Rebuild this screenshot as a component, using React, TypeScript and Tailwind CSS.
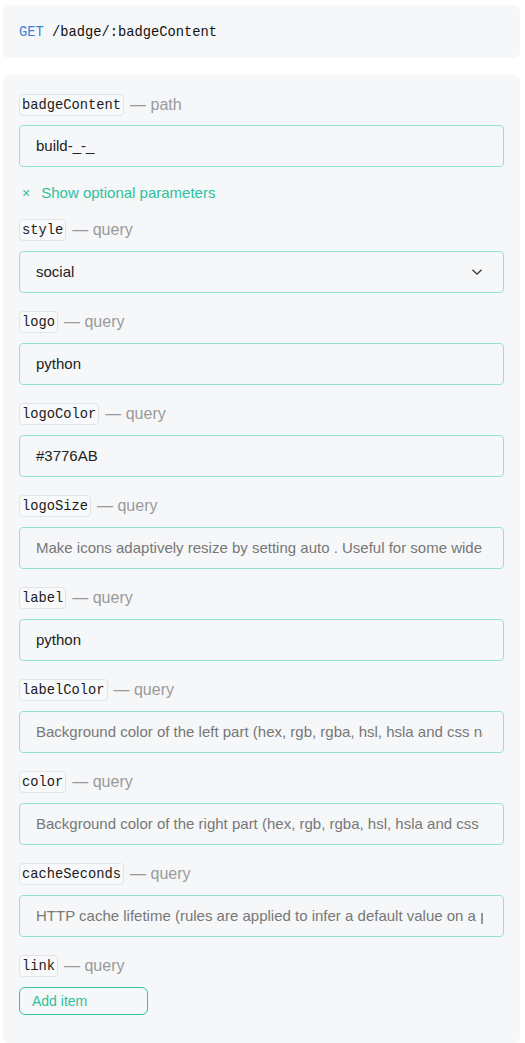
import React from 'react';

interface Param {
  name: string;
  kind: 'path' | 'query';
  value?: string;
  placeholder?: string;
  select?: boolean;
}

const mono = { fontFamily: '"Liberation Mono", "DejaVu Sans Mono", monospace' };

const optionalParams: Param[] = [
  { name: 'style', kind: 'query', value: 'social', select: true },
  { name: 'logo', kind: 'query', value: 'python' },
  { name: 'logoColor', kind: 'query', value: '#3776AB' },
  { name: 'logoSize', kind: 'query', placeholder: 'Make icons adaptively resize by setting auto . Useful for some wide logos like amd and amg.' },
  { name: 'label', kind: 'query', value: 'python' },
  { name: 'labelColor', kind: 'query', placeholder: 'Background color of the left part (hex, rgb, rgba, hsl, hsla and css named colors supported).' },
  { name: 'color', kind: 'query', placeholder: 'Background color of the right part (hex, rgb, rgba, hsl, hsla and css named colors supported).' },
  { name: 'cacheSeconds', kind: 'query', placeholder: 'HTTP cache lifetime (rules are applied to infer a default value on a per-badge basis).' },
];

const ParamLabel: React.FC<{ name: string; kind: string }> = ({ name, kind }) => (
  <div className="flex items-center h-[22px]">
    <code
      className="h-[22px] flex items-center pt-[2px] px-[2px] rounded-[4px] border border-[#e2e4e7] bg-[#f8f9fa] text-[13.75px] text-[#1b1b1b]"
      style={mono}
    >
      {name}
    </code>
    <span className="ml-[6px] text-[16px] text-[#9a9a9a]">— {kind}</span>
  </div>
);

const Field: React.FC<{ p: Param }> = ({ p }) => (
  <div className="flex flex-col gap-[10px]">
    <ParamLabel name={p.name} kind={p.kind} />
    <div className="h-[42px] flex items-center justify-between rounded-[4px] border border-[#93e3cf] pl-[16px] pr-[20px] overflow-hidden">
      {p.value ? (
        <span className="text-[15px] text-[#222] whitespace-nowrap">{p.value}</span>
      ) : (
        <span className="text-[15px] text-[#777] whitespace-nowrap overflow-hidden">{p.placeholder}</span>
      )}
      {p.select && (
        <svg width="12" height="8" viewBox="0 0 12 8" fill="none" className="shrink-0">
          <path d="M1.5 1.8 6 6.2 10.5 1.8" stroke="#333" strokeWidth="1.3" />
        </svg>
      )}
    </div>
  </div>
);

export default function App() {
  return (
    <div className="w-[525px] min-h-[1043px] bg-white px-[3px] pt-[5px]" style={{ fontFamily: '"Liberation Sans", Arial, sans-serif' }}>
      <div className="h-[53px] rounded-[6px] bg-[#f6f7f9] flex items-center pt-[4px] px-[16px] w-[517px]">
        <span className="text-[13.75px] text-[#111]" style={mono}>
          <span className="text-[#3b82d6]">GET</span> /badge/:badgeContent
        </span>
      </div>

      <div className="mt-[17px] w-[517px] rounded-[6px] bg-[#f6f7f9] px-[16px] pt-[19px] pb-[28px]">
        <div className="flex flex-col gap-[9px]">
          <ParamLabel name="badgeContent" kind="path" />
          <div className="h-[42px] flex items-center rounded-[4px] border border-[#93e3cf] pl-[16px]">
            <span className="text-[15px] text-[#222]">build-_-_</span>
          </div>
        </div>

        <div className="h-[52px] flex items-center text-[15px] text-[#2dc19f]">
          <span className="ml-[3px] mr-[11px] text-[14px]">×</span>
          Show optional parameters
        </div>

        <div className="flex flex-col gap-[18px]">
          {optionalParams.map((p) => (
            <Field key={p.name} p={p} />
          ))}
          <div className="flex flex-col gap-[10px]">
            <ParamLabel name="link" kind="query" />
            <button className="w-[129px] h-[28px] rounded-[6px] border border-[#2ec4a1] text-left pl-[12px] text-[14px] text-[#2dc19f]">
              Add item
            </button>
          </div>
        </div>
      </div>
    </div>
  );
}
